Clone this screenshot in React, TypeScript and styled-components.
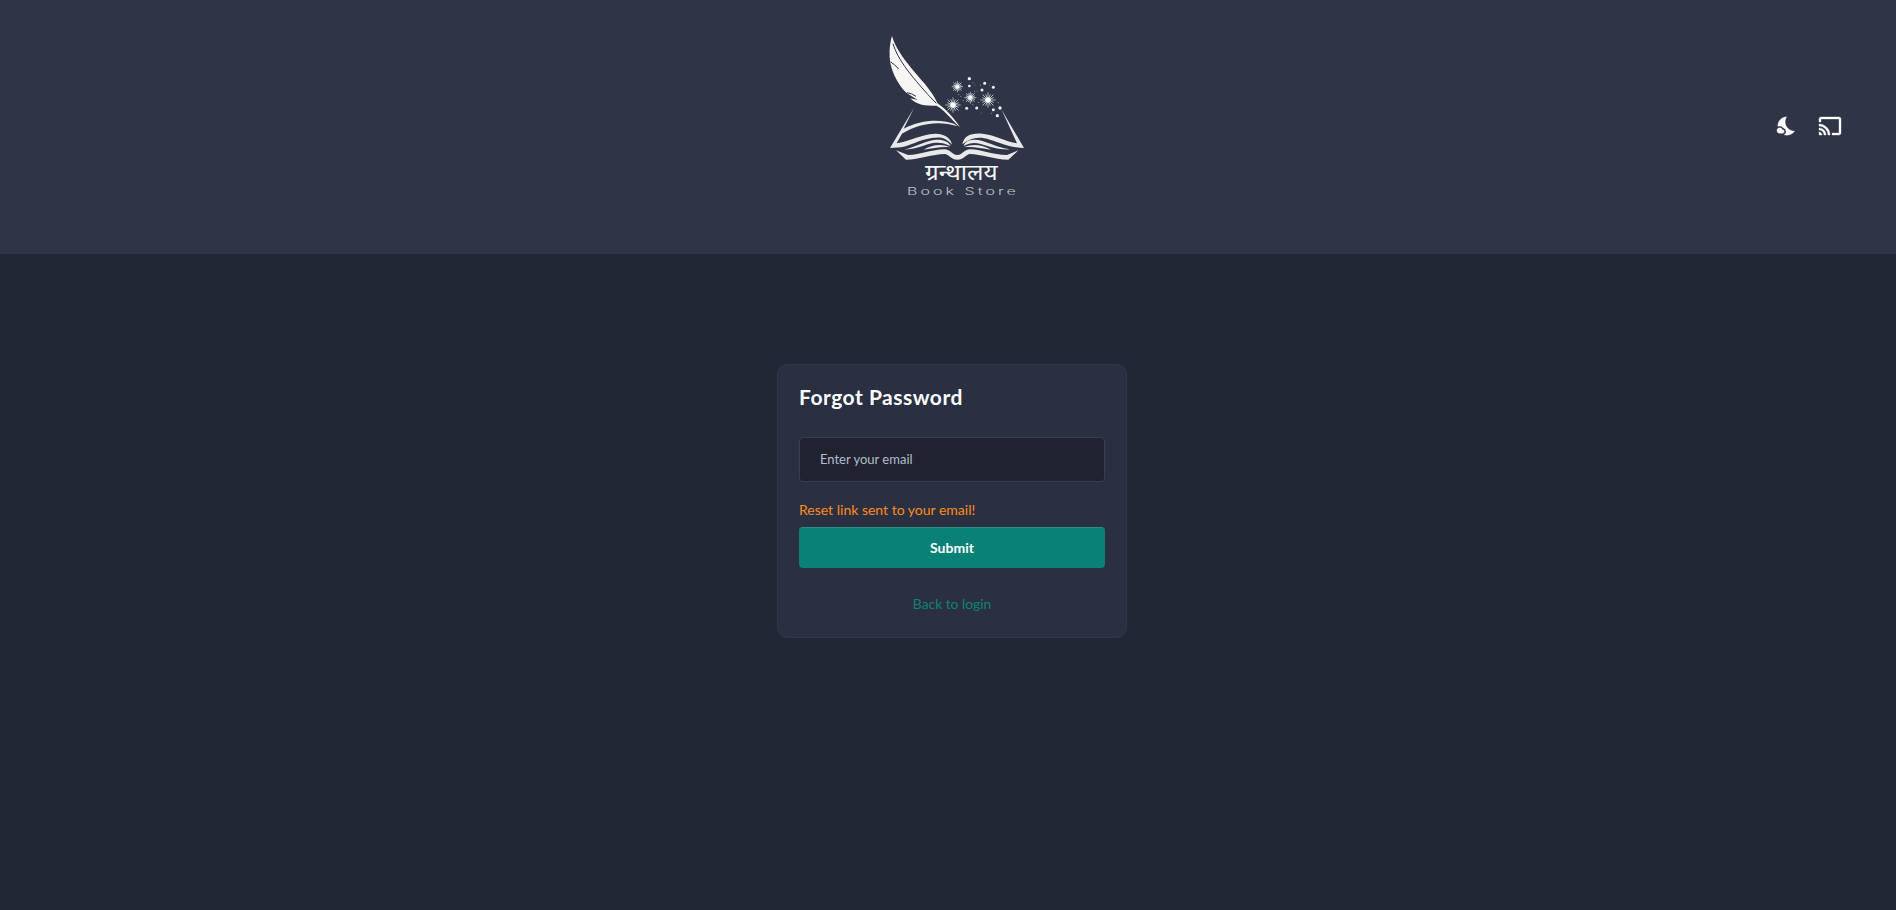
import React from "react";
import styled, { createGlobalStyle } from "styled-components";
import { MdCast, MdNightsStay } from "react-icons/md";

const GlobalStyle = createGlobalStyle`
  * { box-sizing: border-box; }
  body {
    margin: 0;
    background: #222735;
    font-family: Lato, "Liberation Sans", sans-serif;
  }
`;

const Page = styled.div`
  min-height: 100vh;
  display: flex;
  flex-direction: column;
`;

const Header = styled.header`
  height: 254px;
  display: grid;
  grid-template-columns: 1fr 180px 1fr;
  align-items: start;
  padding: 20px 54px 0 78px;
  background: #2f3447;
`;

const Logo = styled.svg`
  grid-column: 2;
  width: 180px;
  height: 190px;
`;

const Actions = styled.div`
  justify-self: end;
  display: flex;
  align-items: center;
  gap: 20px;
  margin-top: 94px;
`;

const IconButton = styled.button`
  display: flex;
  padding: 0;
  border: 0;
  background: none;
  color: #fff;
  svg { stroke: none; }
  path:not([fill="none"]) { stroke: currentColor; stroke-width: 0.35px; }
`;

const Main = styled.main`
  padding: 110px 0 0 8px;
  display: flex;
  justify-content: center;
`;

const Card = styled.form`
  width: 350px;
  height: 274px;
  padding: 21px;
  display: flex;
  flex-direction: column;
  background: #2b2f42;
  border: 1px solid #31364a;
  border-radius: 10px;
`;

const Title = styled.h1`
  margin: 0 0 30px;
  font-size: 21px;
  line-height: 21px;
  font-weight: 700;
  letter-spacing: 0.5px;
  color: #fff;
  white-space: nowrap;
`;

const EmailInput = styled.input`
  width: 100%;
  height: 45px;
  padding: 0 20px 2px;
  border: 1px solid #3a3d4d;
  border-radius: 4px;
  outline: 0;
  background: #202230;
  color: #fff;
  font: 400 13px Lato, sans-serif;
  &::placeholder { color: #b2becd; opacity: 1; }
`;

const Message = styled.p`
  margin: 18px 0 7px;
  font-size: 14px;
  line-height: 20px;
  color: #ff8b1f;
`;

const Submit = styled.button`
  height: 41px;
  padding: 0 0 2px;
  border: 0;
  border-top: 1px solid #279187;
  border-radius: 4px;
  background: #098177;
  color: #fff;
  font: 700 14px Lato, sans-serif;
`;

const BackLink = styled.a`
  align-self: center;
  margin-top: 26px;
  font-size: 14px;
  line-height: 20px;
  letter-spacing: -0.08px;
  color: #0b8378;
`;

type Spark = { x: number; y: number; r: number };

const bursts: Spark[] = [
  { x: 262, y: 200, r: 17 },
  { x: 249, y: 255, r: 23 },
  { x: 301, y: 233, r: 18 },
  { x: 354, y: 240, r: 23 },
];

const dots: Spark[] = [
  { x: 298, y: 176, r: 5 }, { x: 298, y: 198, r: 4 }, { x: 344, y: 190, r: 4.5 },
  { x: 336, y: 210, r: 4.5 }, { x: 370, y: 202, r: 4.5 }, { x: 290, y: 265, r: 4.5 },
  { x: 320, y: 264, r: 4.5 }, { x: 370, y: 269, r: 4.5 }, { x: 390, y: 264, r: 5 },
  { x: 382, y: 287, r: 5 },
];

const dust: Spark[] = [
  { x: 309, y: 188, r: 2 }, { x: 315, y: 194, r: 1.5 }, { x: 331, y: 196, r: 2 },
  { x: 359, y: 196, r: 1.5 }, { x: 314, y: 214, r: 2 }, { x: 321, y: 213, r: 1.5 },
  { x: 266, y: 224, r: 2 }, { x: 272, y: 229, r: 2 }, { x: 280, y: 242, r: 2 },
  { x: 326, y: 247, r: 2 }, { x: 308, y: 254, r: 2 }, { x: 364, y: 280, r: 2 },
  { x: 334, y: 279, r: 1.5 }, { x: 385, y: 248, r: 2 },
];

const Burst = ({ x, y, r }: Spark) => (
  <g transform={`translate(${x} ${y})`}>
    {Array.from({ length: 16 }, (_, i) => (
      <line key={i} y1="0" y2={i % 2 ? -r * 0.8 : -r} transform={`rotate(${i * 22.5})`} stroke="#efefef" strokeWidth="2" />
    ))}
    <circle r={r * 0.36} fill="#fff" />
  </g>
);

const BookLogo = () => (
  <Logo viewBox="0 0 540 570" role="img" aria-label="Book Store">
    <path fill="#f7f6f5" d="M66 48C57 76 56 116 65 145C75 176 91 202 110 219L143 240L121 235C137 252 159 259 199 257C220 267 243 297 270 322C250 291 230 270 202 249C186 210 146 173 121 141C98 112 76 82 66 48Z" />
    <path fill="none" stroke="#2f3447" strokeWidth="3" d="M69 71C83 119 123 165 151 198Q173 224 199 250M62 126Q73 132 86 147M111 218Q126 220 138 229" />
    <g fill="#e9e9e9">
      <path d="M132 264L101 326C151 300 207 296 252 311L263 319C207 302 151 309 96 341L80 370C126 361 153 344 194 341C225 340 243 356 246 374C226 351 209 350 185 354C145 360 125 376 93 382L60 384Z" />
      <path d="M394 268L462 384C420 382 392 369 360 359C324 348 301 354 277 373C281 350 300 338 337 341C376 345 408 365 441 370Z" />
      <path d="M103 389C137 380 167 361 199 359C220 358 237 365 242 378C223 369 208 366 189 369C162 375 136 388 103 389Z" />
      <path d="M160 389C187 374 214 370 240 382C215 379 191 385 160 389Z" />
      <path d="M421 388C380 383 343 358 311 359C295 360 284 366 281 378C298 369 313 367 332 372C363 381 389 390 421 388Z" />
      <path d="M364 389C336 374 309 370 282 382C311 379 333 386 364 389Z" />
      <path d="M78 391L114 405C151 405 187 388 223 388C242 388 245 405 262 405C279 405 281 388 301 388C337 389 367 405 411 405L445 391L415 419C372 419 333 402 300 402C288 402 284 419 262 419C241 419 237 402 224 402C188 402 149 419 108 419Z" />
    </g>
    {bursts.map((s) => <Burst key={`${s.x}-${s.y}`} {...s} />)}
    {dots.map((s) => <circle key={`${s.x}-${s.y}`} cx={s.x} cy={s.y} r={s.r} fill="#f1f1f1" />)}
    {dust.map((s) => <circle key={`${s.x}-${s.y}`} cx={s.x} cy={s.y} r={s.r} fill="#858894" />)}
    <text x="165" y="480" fontFamily='"Noto Sans Devanagari", "Noto Sans", "FreeSans", sans-serif' fontSize="67" fill="#f5f5f5" textLength="218" lengthAdjust="spacingAndGlyphs">ग्रन्थालय</text>
    <text transform="translate(111 525) scale(1.6 1)" fontFamily="Inter, sans-serif" fontSize="30" fontWeight="300" fill="#c3c5ca" textLength="204" lengthAdjust="spacing">Book Store</text>
  </Logo>
);

export default function App() {
  return (
    <Page>
      <GlobalStyle />
      <Header>
        <BookLogo />
        <Actions>
          <IconButton aria-label="Toggle theme"><MdNightsStay size={22} /></IconButton>
          <IconButton aria-label="Cast"><MdCast size={24} /></IconButton>
        </Actions>
      </Header>
      <Main>
        <Card onSubmit={(e) => e.preventDefault()}>
          <Title>Forgot Password</Title>
          <EmailInput type="email" placeholder="Enter your email" />
          <Message>Reset link sent to your email!</Message>
          <Submit type="submit">Submit</Submit>
          <BackLink>Back to login</BackLink>
        </Card>
      </Main>
    </Page>
  );
}
